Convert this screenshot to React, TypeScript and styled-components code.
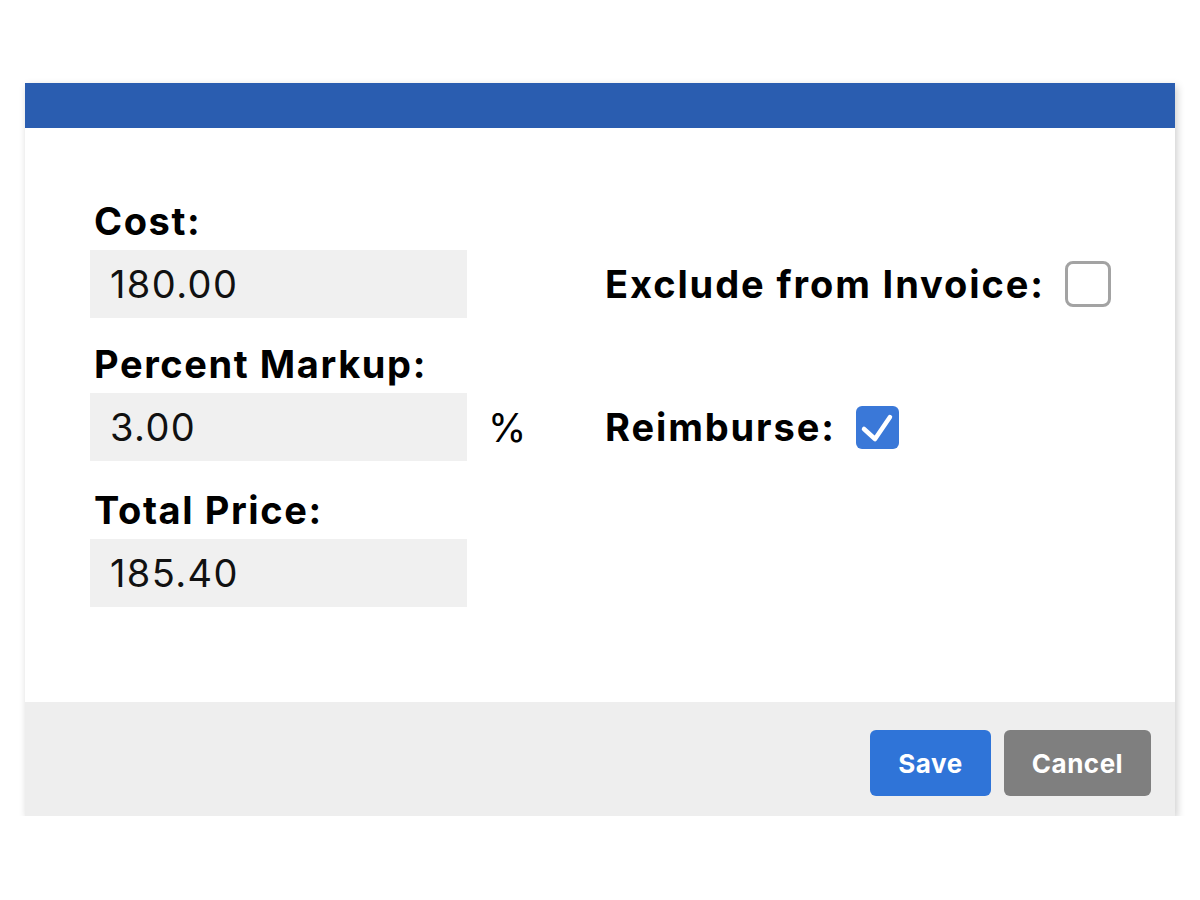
import React, { useState } from "react";
import styled, { createGlobalStyle } from "styled-components";

const Global = createGlobalStyle`
  html, body { margin: 0; padding: 0; background: #ffffff; }
  body { font-family: Inter, "Noto Sans", "DejaVu Sans", sans-serif; color: #000; }
  * { box-sizing: border-box; }
`;

const Page = styled.div`
  padding: 83px 25px 0 25px;
  width: 1200px;
`;

const Card = styled.div`
  width: 1150px;
  background: #ffffff;
  box-shadow: 2px 3px 8px rgba(0, 0, 0, 0.2);
`;

const Header = styled.div`
  height: 45px;
  background: #2a5db0;
`;

const Body = styled.div`
  display: grid;
  grid-template-columns: 377px 138px 1fr;
  grid-template-rows: auto 68px auto 68px auto 68px;
  padding: 45px 0 95px 65px;
`;

const Label = styled.div<{ $row: number; $space: number }>`
  grid-column: 1 / 3;
  grid-row: ${(p) => p.$row};
  margin-top: ${(p) => p.$space}px;
  font-size: 38px;
  font-weight: 700;
  letter-spacing: 1.6px;
  line-height: 34px;
  padding: 0 0 12px 4px;
`;

const Input = styled.input<{ $row: number }>`
  grid-column: 1;
  grid-row: ${(p) => p.$row};
  width: 377px;
  height: 68px;
  border: none;
  outline: none;
  background: #f0f0f0;
  padding: 0 0 0 20px;
  font-family: inherit;
  font-size: 38px;
  letter-spacing: 1.4px;
  font-weight: 400;
  color: #111;
`;

const Suffix = styled.div<{ $row: number }>`
  grid-column: 2;
  grid-row: ${(p) => p.$row};
  display: flex;
  align-items: center;
  padding-left: 21px;
  font-size: 39px;
`;

const CheckRow = styled.label<{ $row: number }>`
  grid-column: 3;
  grid-row: ${(p) => p.$row};
  display: flex;
  align-items: center;
  gap: 20px;
  font-size: 38px;
  font-weight: 700;
  letter-spacing: 1.9px;
  cursor: pointer;
`;

const Box = styled.span<{ $checked: boolean }>`
  flex: none;
  display: inline-flex;
  align-items: center;
  justify-content: center;
  width: ${(p) => (p.$checked ? "43px" : "46px")};
  height: ${(p) => (p.$checked ? "43px" : "46px")};
  border-radius: ${(p) => (p.$checked ? "6px" : "8px")};
  background: ${(p) => (p.$checked ? "#3a78d8" : "#ffffff")};
  border: ${(p) => (p.$checked ? "none" : "3px solid #a3a3a3")};
`;

const Footer = styled.div`
  background: #eeeeee;
  height: 114px;
  display: flex;
  justify-content: flex-end;
  align-items: flex-start;
  gap: 13px;
  padding: 28px 24px 0 0;
`;

const Button = styled.button<{ $variant: "primary" | "secondary" }>`
  height: 66px;
  padding: 0;
  width: ${(p) => (p.$variant === "primary" ? "121px" : "147px")};
  border: none;
  border-radius: 6px;
  background: ${(p) => (p.$variant === "primary" ? "#2f74d8" : "#7f7f7f")};
  color: #ffffff;
  font-family: inherit;
  font-size: 26px;
  font-weight: 700;
  letter-spacing: 0.5px;
  cursor: pointer;
`;

const Check = () => (
  <svg width="43" height="43" viewBox="0 0 43 43" fill="none">
    <path d="M8 23 L19 33 L34 11" stroke="#ffffff" strokeWidth="4.5" strokeLinecap="round" strokeLinejoin="round" />
  </svg>
);

export default function App() {
  const [exclude, setExclude] = useState(false);
  const [reimburse, setReimburse] = useState(true);
  return (
    <>
      <Global />
      <Page>
        <Card>
          <Header />
          <Body>
            <Label $row={1} $space={31}>Cost:</Label>
            <Input $row={2} defaultValue="180.00" />
            <CheckRow $row={2} onClick={() => setExclude(!exclude)}>
              Exclude from Invoice:
              <Box $checked={exclude}>{exclude && <Check />}</Box>
            </CheckRow>
            <Label $row={3} $space={29}>Percent Markup:</Label>
            <Input $row={4} defaultValue="3.00" />
            <Suffix $row={4}>%</Suffix>
            <CheckRow $row={4} onClick={() => setReimburse(!reimburse)}>
              Reimburse:
              <Box $checked={reimburse}>{reimburse && <Check />}</Box>
            </CheckRow>
            <Label $row={5} $space={32}>Total Price:</Label>
            <Input $row={6} defaultValue="185.40" />
          </Body>
          <Footer>
            <Button $variant="primary">Save</Button>
            <Button $variant="secondary">Cancel</Button>
          </Footer>
        </Card>
      </Page>
    </>
  );
}
